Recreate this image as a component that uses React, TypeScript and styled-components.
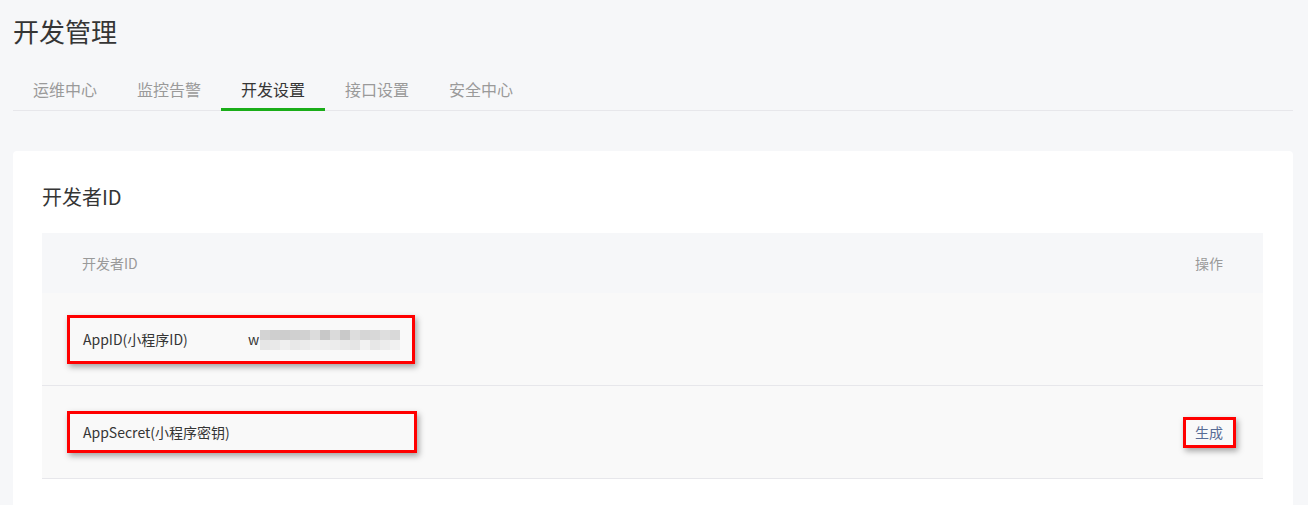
import React from 'react';
import styled, { createGlobalStyle } from 'styled-components';

const GlobalStyle = createGlobalStyle`
  html, body {
    margin: 0;
    padding: 0;
    background: #f6f7f9;
    font-family: "Noto Sans CJK SC", "Microsoft YaHei", sans-serif;
    color: #353535;
  }
`;

const Page = styled.div`
  padding: 13px 15px 0 13px;
  min-height: 505px;
  box-sizing: border-box;
`;

const PageTitle = styled.h1`
  margin: 0;
  font-size: 26px;
  font-weight: 400;
  line-height: 36px;
  color: #353535;
`;

const Tabs = styled.div`
  display: flex;
  margin-top: 22px;
  border-bottom: 1px solid #e7e7eb;
`;

const Tab = styled.div<{ $active?: boolean }>`
  width: 104px;
  box-sizing: border-box;
  text-align: center;
  font-size: 16px;
  line-height: 37px;
  height: 40px;
  color: ${(p) => (p.$active ? '#353535' : '#9a9a9a')};
  border-bottom: 3px solid ${(p) => (p.$active ? '#1aad19' : 'transparent')};
  margin-bottom: -1px;
`;

const Card = styled.section`
  margin-top: 40px;
  background: #fff;
  border-radius: 4px;
  padding: 30px 30px 30px 29px;
`;

const CardTitle = styled.h2`
  margin: 0 0 20px;
  font-size: 20px;
  font-weight: 400;
  line-height: 32px;
  color: #353535;
`;

const Table = styled.div`
  display: flex;
  flex-direction: column;
`;

const HeadRow = styled.div`
  display: flex;
  align-items: center;
  justify-content: space-between;
  height: 60px;
  padding: 0 40px;
  background: #f6f7f9;
  font-size: 14px;
  color: #9a9a9a;
`;

const Row = styled.div`
  display: flex;
  align-items: center;
  justify-content: space-between;
  height: 92px;
  padding: 0 27px 0 25px;
  background: #f9f9f9;
  border-bottom: 1px solid #e7e7eb;
  font-size: 14px;
  color: #353535;
`;

const Marked = styled.div<{ $w: number; $h: number; $pad: number }>`
  display: flex;
  align-items: center;
  box-sizing: border-box;
  width: ${(p) => p.$w}px;
  height: ${(p) => p.$h}px;
  padding-left: ${(p) => p.$pad}px;
  border: 3px solid #f00;
  box-shadow: 2px 3px 6px rgba(0, 0, 0, 0.35);
`;

const Label = styled.span`
  width: 165px;
`;

const Value = styled.span`
  display: flex;
  align-items: center;
`;

const Mosaic = styled.div`
  display: grid;
  grid-template-columns: repeat(14, 10px);
  grid-auto-rows: 10px;
  margin-left: 1px;
  margin-top: 2px;
`;

const Pixel = styled.div<{ $c: string }>`
  background: ${(p) => p.$c};
`;

const LinkBtn = styled.span`
  color: #576b95;
  cursor: pointer;
`;

const topShades = ['d3d3d3', 'cfcfcf', 'cdcdcd', 'd0d0d0', 'd1d1d1', 'dcdcdc', 'c8c8c8', 'dadada', 'c9c9c9', 'dddddd', 'd6d6d6', 'd8d8d8', 'dedede', 'd9d9d9'];
const bottomShades = ['e6e6e6', 'e9e9e9', 'efefef', 'e8e8e8', 'ebebeb', 'f0f0f0', 'eeeeee', 'ececec', 'e9e9e9', 'e5e5e5', 'f2f2f2', 'e7e7e7', 'ececec', 'f1f1f1'];

const tabs = ['运维中心', '监控告警', '开发设置', '接口设置', '安全中心'];

export default function App() {
  return (
    <>
      <GlobalStyle />
      <Page>
        <PageTitle>开发管理</PageTitle>
        <Tabs>
          {tabs.map((t) => (
            <Tab key={t} $active={t === '开发设置'}>{t}</Tab>
          ))}
        </Tabs>
        <Card>
          <CardTitle>开发者ID</CardTitle>
          <Table>
            <HeadRow>
              <span>开发者ID</span>
              <span>操作</span>
            </HeadRow>
            <Row>
              <Marked $w={348} $h={49} $pad={13}>
                <Label>AppID(小程序ID)</Label>
                <Value>
                  w
                  <Mosaic>
                    {[...topShades, ...bottomShades].map((c, i) => (
                      <Pixel key={i} $c={'#' + c} />
                    ))}
                  </Mosaic>
                </Value>
              </Marked>
            </Row>
            <Row>
              <Marked $w={350} $h={42} $pad={13}>
                <span>AppSecret(小程序密钥)</span>
              </Marked>
              <Marked $w={53} $h={31} $pad={9}>
                <LinkBtn>生成</LinkBtn>
              </Marked>
            </Row>
          </Table>
        </Card>
      </Page>
    </>
  );
}
